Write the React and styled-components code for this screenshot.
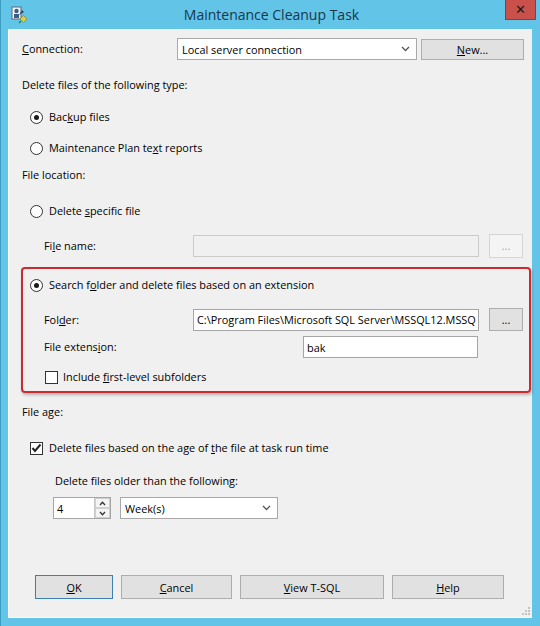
import styled, { createGlobalStyle } from "styled-components";

const Global = createGlobalStyle`
    html, body {
        margin: 0;
        padding: 0;
        background: #5fc3e6;
    }
    * { box-sizing: border-box; }
`

const Frame = styled.div`
    width: 540px;
    height: 626px;
    display: flex;
    flex-direction: column;
    background: #62c4e7;
    border-left: 1px solid #3d9cc2;
    font-family: "Open Sans", "Noto Sans", sans-serif;
    font-size: 10.9px;
    color: #000;
`

const TitleBar = styled.div`
    height: 29px;
    display: flex;
    align-items: flex-start;
    position: relative;
`

const AppIcon = styled.svg`
    margin: 6px 0 0 9px;
`

const Title = styled.div`
    flex: 1;
    text-align: center;
    font-size: 14px;
    line-height: 29px;
    color: #16384f;
    padding-left: 10px;
`

const CloseButton = styled.div`
    width: 31px;
    height: 20px;
    background: #c9504b;
    border: 1px solid #9d3530;
    border-top: none;
    margin-right: 4px;
    display: flex;
    align-items: center;
    justify-content: center;
    color: #1a1a1a;
    font-family: "DejaVu Sans", sans-serif;
    font-weight: bold;
    font-size: 13px;
`

const Client = styled.div`
    flex: 1;
    margin: 0 8px 8px 7px;
    background: #f0f0f0;
    border-left: 1px solid #fbfbfb;
    border-bottom: 1px solid #fbfbfb;
    padding: 9px 0 0 13px;
    display: flex;
    flex-direction: column;
    position: relative;
`

const Row = styled.div`
    display: flex;
    align-items: center;
    height: ${p => p.h || 16}px;
    margin-top: ${p => p.mt || 0}px;
    padding-left: ${p => p.pl || 0}px;
    gap: ${p => p.gap || 0}px;
`

const Label = styled.div`
    width: ${p => p.w ? p.w + "px" : "auto"};
    line-height: 16px;
    white-space: nowrap;
`

const Combo = styled.div`
    width: ${p => p.w}px;
    height: ${p => p.h || 22}px;
    background: #fff;
    border: 1px solid #a9a9a9;
    display: flex;
    align-items: center;
    justify-content: space-between;
    padding: 0 6px 0 4px;
    white-space: nowrap;
`

const Input = styled.div`
    width: ${p => p.w}px;
    height: ${p => p.h || 22}px;
    background: ${p => p.disabled ? "#f0f0f0" : "#fff"};
    border: 1px solid ${p => p.disabled ? "#cbcbcb" : "#a5a5a5"};
    display: flex;
    align-items: center;
    padding: 0 3px;
    white-space: nowrap;
    overflow: hidden;
`

const Button = styled.div`
    width: ${p => p.w}px;
    height: ${p => p.h || 24}px;
    background: ${p => p.disabled ? "#f4f4f4" : "#e1e1e1"};
    border: 1px solid ${p => p.focused ? "#3c7fb1" : p.disabled ? "#d5d5d5" : "#adadad"};
    color: ${p => p.disabled ? "#a0a0a0" : "#000"};
    display: flex;
    align-items: center;
    justify-content: center;
    white-space: nowrap;
`

const Radio = styled.span`
    width: 13px;
    height: 13px;
    border-radius: 50%;
    border: 1px solid #333;
    background: #fff;
    display: flex;
    align-items: center;
    justify-content: center;
    margin-right: 6px;
    flex: none;

    &::after {
        content: "";
        width: 5px;
        height: 5px;
        border-radius: 50%;
        background: ${p => p.checked ? "#1a1a1a" : "transparent"};
    }
`

const Check = styled.span`
    width: 13px;
    height: 13px;
    border: 1px solid #333;
    background: #fff;
    display: flex;
    align-items: center;
    justify-content: center;
    margin-right: ${p => p.gap || 6}px;
    flex: none;
`

const Highlight = styled.div`
    margin: 10px 0 0 -1px;
    width: 510px;
    border: 2px solid #cc2a31;
    border-radius: 4px;
    box-shadow: 1px 2px 3px rgba(0, 0, 0, 0.25);
    padding: 8px 0 6px 7px;
    display: flex;
    flex-direction: column;
`

const Spinner = styled.div`
    display: flex;
    width: 58px;
    height: 22px;
    background: #fff;
    border: 1px solid #a5a5a5;
`

const SpinText = styled.div`
    flex: 1;
    padding-left: 3px;
    display: flex;
    align-items: center;
`

const SpinArrows = styled.div`
    width: 16px;
    display: flex;
    flex-direction: column;
    border-left: 1px solid #c8c8c8;
`

const SpinArrow = styled.div`
    flex: 1;
    display: flex;
    align-items: center;
    justify-content: center;
    background: #f4f4f4;
    border: 1px solid #d0d0d0;
`

const Grip = styled.svg`
    position: absolute;
    right: 1px;
    bottom: 1px;
`

const Arrow = () => (
    <svg width="9" height="6" viewBox="0 0 9 6">
        <path d="M1 1 L4.5 4.5 L8 1" stroke="#555" strokeWidth="1.3" fill="none" />
    </svg>
)

const Tick = () => (
    <svg width="11" height="10" viewBox="0 0 11 10">
        <path d="M1.5 5 L4 8 L9.5 1.5" stroke="#222" strokeWidth="2" fill="none" />
    </svg>
)

const Chevron = ({ up }) => (
    <svg width="7" height="5" viewBox="0 0 7 5">
        <path d={up ? "M1 4 L3.5 1.3 L6 4" : "M1 1 L3.5 3.7 L6 1"} stroke="#333" strokeWidth="1.3" fill="none" />
    </svg>
)

const App = () => {
    return (
        <Frame>
            <Global />
            <TitleBar>
                <AppIcon width="18" height="18" viewBox="0 0 18 18">
                    <rect x="2" y="1" width="9" height="12" fill="#f4f4f4" stroke="#5a6a7a" />
                    <circle cx="6.5" cy="5" r="2.2" fill="#3b5e8c" />
                    <rect x="4" y="8" width="5" height="4" fill="#3b5e8c" />
                    <path d="M9 9 L12 4 L14 6 Z" fill="#2b4a6a" />
                    <path d="M10 13 L13.5 9.5 L17 13 L13.5 16.5 Z" fill="#d8d04a" stroke="#8a8a30" strokeWidth="0.8" />
                    <path d="M11 15 L9 17" stroke="#3b7a3b" strokeWidth="1.5" />
                </AppIcon>
                <Title>Maintenance Cleanup Task</Title>
                <CloseButton>✕</CloseButton>
            </TitleBar>
            <Client>
                <Row h={22}>
                    <Label w={155}><u>C</u>onnection:</Label>
                    <Combo w={240}>Local server connection <Arrow /></Combo>
                    <Button w={103} h={21} style={{ marginLeft: 4 }}><u>N</u>ew...</Button>
                </Row>

                <Row mt={17}><Label>Delete files of the following type:</Label></Row>
                <Row mt={16} pl={8}><Radio checked /><Label>Bac<u>k</u>up files</Label></Row>
                <Row mt={15} pl={8}><Radio /><Label>Maintenance Plan te<u>x</u>t reports</Label></Row>

                <Row mt={11}><Label>File location:</Label></Row>
                <Row mt={20} pl={8}><Radio /><Label>Delete <u>s</u>pecific file</Label></Row>
                <Row mt={15} pl={22} h={23}>
                    <Label w={149}>Fi<u>l</u>e name:</Label>
                    <Input w={286} disabled />
                    <Button w={34} h={24} disabled style={{ marginLeft: 10 }}>...</Button>
                </Row>

                <Highlight>
                    <Row><Radio checked /><Label>Search f<u>o</u>lder and delete files based on an extension</Label></Row>
                    <Row mt={15} pl={14} h={23}>
                        <Label w={149}>Fol<u>d</u>er:</Label>
                        <Input w={286}>C:\Program Files\Microsoft SQL Server\MSSQL12.MSSQ</Input>
                        <Button w={34} h={23} style={{ marginLeft: 10 }}>...</Button>
                    </Row>
                    <Row mt={5} pl={14} h={22}>
                        <Label w={259}>File extens<u>i</u>on:</Label>
                        <Input w={175}>bak</Input>
                    </Row>
                    <Row mt={11} pl={15}>
                        <Check gap={5} />
                        <Label>Include <u>f</u>irst-level subfolders</Label>
                    </Row>
                </Highlight>

                <Row mt={11}><Label>File age:</Label></Row>
                <Row mt={20} pl={8}>
                    <Check><Tick /></Check>
                    <Label>Delete files based on the age of <u>t</u>he file at task run time</Label>
                </Row>
                <Row mt={17} pl={33}><Label>Delete files older than the following:</Label></Row>
                <Row mt={8} pl={31} h={22} gap={9}>
                    <Spinner>
                        <SpinText>4</SpinText>
                        <SpinArrows>
                            <SpinArrow><Chevron up /></SpinArrow>
                            <SpinArrow><Chevron /></SpinArrow>
                        </SpinArrows>
                    </Spinner>
                    <Combo w={158}>Week(s) <Arrow /></Combo>
                </Row>

                <Row mt={56} pl={13} h={24} gap={8}>
                    <Button w={78} focused><u>O</u>K</Button>
                    <Button w={111}><u>C</u>ancel</Button>
                    <Button w={144}><u>V</u>iew T-SQL</Button>
                    <Button w={112}><u>H</u>elp</Button>
                </Row>

                <Grip width="10" height="10" viewBox="0 0 10 10">
                    <rect x="7" y="1" width="2" height="2" fill="#c4c4c4" />
                    <rect x="4" y="4" width="2" height="2" fill="#c4c4c4" />
                    <rect x="7" y="4" width="2" height="2" fill="#c4c4c4" />
                    <rect x="1" y="7" width="2" height="2" fill="#c4c4c4" />
                    <rect x="4" y="7" width="2" height="2" fill="#c4c4c4" />
                    <rect x="7" y="7" width="2" height="2" fill="#c4c4c4" />
                </Grip>
            </Client>
        </Frame>
    );
}

export default App;
